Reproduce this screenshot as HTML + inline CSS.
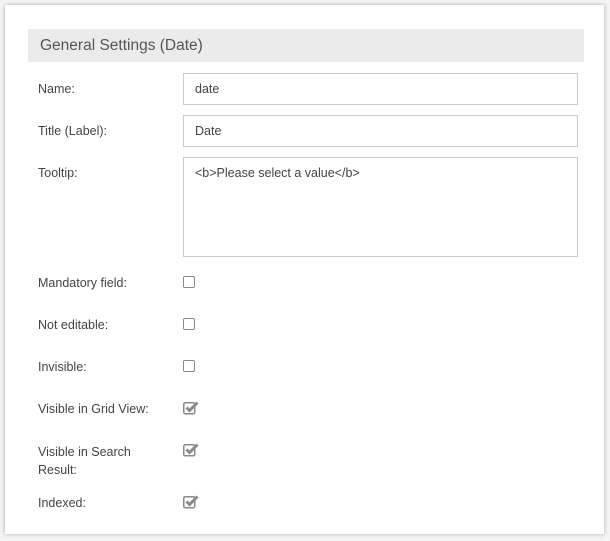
<!DOCTYPE html>
<html><head><style>
body{margin:0;background:#f4f4f4;width:610px;height:541px;overflow:hidden;font-family:"Liberation Sans",sans-serif;}
.panel{position:absolute;left:5px;top:5px;width:599px;height:529px;background:#fff;box-shadow:0 0 4px rgba(0,0,0,.3);}
.hd{position:absolute;left:28px;top:29px;width:556px;height:33px;background:#ebebeb;}
.hd span{position:absolute;left:12px;top:8px;font-size:15.5px;color:#555;}
.l{position:absolute;left:38px;font-size:12.5px;color:#444;line-height:17px;}
.in{position:absolute;left:183px;width:395px;border:1px solid #ccc;box-sizing:border-box;font-size:12.5px;color:#444;padding-left:11px;}
.cb{position:absolute;left:183px;width:12px;height:12px;border:1.5px solid #8a8a8a;border-radius:2px;box-sizing:border-box;}
svg{position:absolute;left:182px;}
</style></head><body>
<div class="panel"></div>
<div class="hd"><span>General Settings (Date)</span></div>
<div class="l" style="top:81px">Name:</div>
<div class="in" style="top:73px;height:32px;line-height:31px">date</div>
<div class="l" style="top:123px">Title (Label):</div>
<div class="in" style="top:115px;height:32px;line-height:31px">Date</div>
<div class="l" style="top:165px">Tooltip:</div>
<div class="in" style="top:157px;height:100px;padding-top:7px;line-height:16px">&lt;b&gt;Please select a value&lt;/b&gt;</div>
<div class="l" style="top:275px">Mandatory field:</div><div class="cb" style="top:276px"></div>
<div class="l" style="top:317px">Not editable:</div><div class="cb" style="top:318px"></div>
<div class="l" style="top:359px">Invisible:</div><div class="cb" style="top:360px"></div>
<div class="l" style="top:401px">Visible in Grid View:</div>
<div class="l" style="top:443px;line-height:18px">Visible in Search<br>Result:</div>
<div class="l" style="top:495px">Indexed:</div>
<svg style="top:399px" width="20" height="18" viewBox="0 0 20 18"><rect x="1.75" y="3.75" width="11" height="11" rx="1.5" fill="none" stroke="#8a8a8a" stroke-width="1.5"/><path d="M4.5 8.5l3 3 8-8" fill="none" stroke="#8a8a8a" stroke-width="3"/></svg>
<svg style="top:441px" width="20" height="18" viewBox="0 0 20 18"><rect x="1.75" y="3.75" width="11" height="11" rx="1.5" fill="none" stroke="#8a8a8a" stroke-width="1.5"/><path d="M4.5 8.5l3 3 8-8" fill="none" stroke="#8a8a8a" stroke-width="3"/></svg>
<svg style="top:493px" width="20" height="18" viewBox="0 0 20 18"><rect x="1.75" y="3.75" width="11" height="11" rx="1.5" fill="none" stroke="#8a8a8a" stroke-width="1.5"/><path d="M4.5 8.5l3 3 8-8" fill="none" stroke="#8a8a8a" stroke-width="3"/></svg>
</body></html>
